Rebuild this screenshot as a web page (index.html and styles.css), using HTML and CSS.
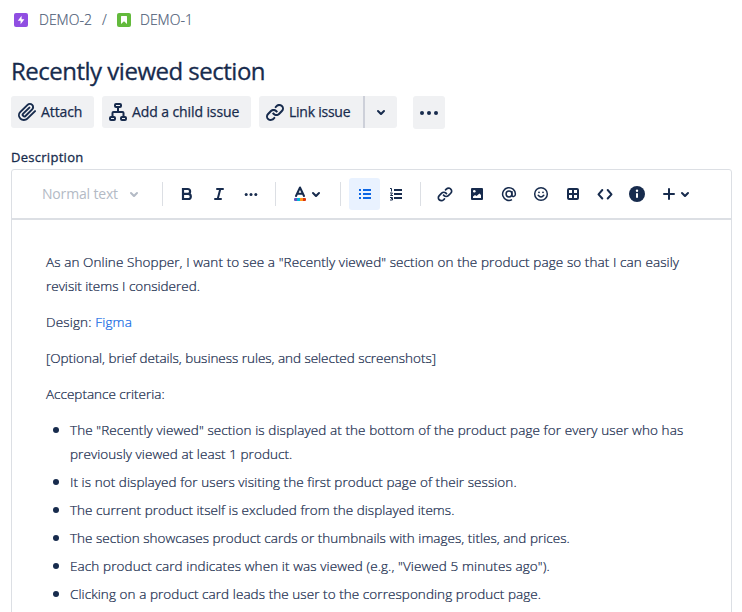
FILE: index.html
```html
<!DOCTYPE html>
<html lang="en">
<head>
<meta charset="utf-8">
<title>Recently viewed section</title>
<link rel="stylesheet" href="styles.css">
</head>
<body>
<svg class="defs" width="0" height="0">
  <symbol id="chevron" viewBox="0 0 24 24"><path fill="currentColor" d="M8.292 10.293a1.009 1.009 0 000 1.419l2.939 2.965c.218.215.5.322.779.322s.556-.107.769-.322l2.93-2.955a1.01 1.01 0 000-1.419.987.987 0 00-1.406 0l-2.298 2.317-2.307-2.327a.99.99 0 00-1.406 0z"/></symbol>
  <symbol id="link" viewBox="0 0 24 24"><path fill="currentColor" d="M12.856 5.457l-.937.92a1.002 1.002 0 000 1.437 1.047 1.047 0 001.463 0l.984-.966c.967-.95 2.542-1.135 3.602-.288a2.54 2.54 0 01.203 3.81l-2.903 2.852a2.646 2.646 0 01-3.696 0l-1.11-1.09L9 13.57l1.108 1.089c1.822 1.788 4.802 1.788 6.622 0l2.905-2.852a4.558 4.558 0 00-.357-6.82c-1.893-1.517-4.695-1.226-6.422.47zM11.144 19.543l.937-.92a1.002 1.002 0 000-1.437 1.047 1.047 0 00-1.462 0l-.985.966c-.967.95-2.542 1.135-3.602.288a2.54 2.54 0 01-.203-3.81l2.903-2.852a2.646 2.646 0 013.696 0l1.11 1.09L15 11.43l-1.108-1.089c-1.822-1.788-4.802-1.788-6.622 0l-2.905 2.852a4.558 4.558 0 00.357 6.82c1.893 1.517 4.695 1.226 6.422-.47z"/></symbol>
</svg>

<nav class="crumbs">
  <svg class="type" viewBox="0 0 14 14"><rect width="14" height="14" rx="2" fill="#904ee2"/><path fill="#fff" d="M7.6 2.8v3.4h2.8L6.6 11.2V7.8H3.8z"/></svg>
  <span class="key">DEMO-2</span>
  <span class="slash">/</span>
  <svg class="type" viewBox="0 0 14 14"><rect width="14" height="14" rx="2" fill="#63ba3c"/><path fill="#fff" d="M4 3.6Q4 3 4.6 3h4.8q.6 0 .6.6V11L7 8.2 4 11z"/></svg>
  <span class="key">DEMO-1</span>
</nav>

<h1 class="title"><span>Recently viewed section</span></h1>

<div class="actions">
  <button class="btn attach"><svg class="icon" viewBox="0 0 24 24"><path fill="currentColor" d="M11.643 17.965c-1.53 1.495-4.016 1.496-5.542.004a3.773 3.773 0 01.002-5.412l7.147-6.985a2.316 2.316 0 013.233-.003c.893.873.895 2.282.004 3.153l-6.703 6.55a.653.653 0 01-.914-.008.62.62 0 010-.902l6.229-6.087a.941.941 0 000-1.353.995.995 0 00-1.384 0l-6.23 6.087a2.502 2.502 0 000 3.607 2.643 2.643 0 003.683.009l6.703-6.55a4.144 4.144 0 00-.003-5.86 4.246 4.246 0 00-6.002.004L4.72 11.204a5.635 5.635 0 00-.001 8.118c2.29 2.237 6.015 2.238 8.308-.004l7.723-7.547a.941.941 0 000-1.353.995.995 0 00-1.384 0l-7.723 7.547z"/></svg><span>Attach</span></button>
  <button class="btn child"><svg class="icon" viewBox="0 0 24 24" fill="none" stroke="currentColor" stroke-width="2"><rect x="9" y="4" width="6" height="3" rx="1"/><rect x="4" y="17" width="5" height="3" rx="1"/><rect x="15" y="17" width="5" height="3" rx="1"/><path d="M12 7v5M6.500 17v-4q0-1 1-1h9q1 0 1 1v4"/></svg><span>Add a child issue</span></button>
  <div class="split">
    <button class="btn linkbtn"><svg class="icon"><use href="#link"/></svg><span>Link issue</span></button>
    <button class="btn drop"><svg class="icon"><use href="#chevron"/></svg></button>
  </div>
  <button class="btn more"><svg class="icon" viewBox="0 0 24 24" fill="currentColor"><circle cx="5" cy="12" r="2"/><circle cx="12" cy="12" r="2"/><circle cx="19" cy="12" r="2"/></svg></button>
</div>

<h2 class="label"><span>Description</span></h2>

<section class="editor">
  <div class="toolbar">
    <div class="style"><span>Normal text</span><svg class="icon"><use href="#chevron"/></svg></div>
    <i class="sep"></i>
    <div class="group g1">
      <div class="tool"><svg class="icon" viewBox="0 0 24 24" fill="none" stroke="currentColor" stroke-width="2.200"><path d="M8 7h4.700a2.400 2.400 0 010 4.800H8zM8 11.800h5.200a2.600 2.600 0 010 5.200H8z"/></svg></div>
      <div class="tool"><svg class="icon" viewBox="0 0 24 24" fill="none" stroke="currentColor" stroke-width="2" stroke-linecap="round"><path d="M10 7h6M8 17h6M13.300 7l-2.600 10"/></svg></div>
      <div class="tool"><svg class="icon" viewBox="0 0 24 24" fill="currentColor"><circle cx="7.200" cy="12.500" r="1.500"/><circle cx="12" cy="12.500" r="1.500"/><circle cx="16.800" cy="12.500" r="1.500"/></svg></div>
    </div>
    <i class="sep"></i>
    <div class="color">
      <svg class="icon" viewBox="0 0 24 24"><path fill="none" stroke="currentColor" stroke-width="2" stroke-linecap="round" stroke-linejoin="round" d="M8 14l4-8.500 4 8.500M9.400 11.800h5.200"/><path fill="#6554c0" d="M7 16h2v3H7q-1 0-1-1v-1q0-1 1-1z"/><path fill="#00b8d9" d="M9 16h3v3H9z"/><path fill="#ff991f" d="M12 16h3v3h-3z"/><path fill="#de350b" d="M15 16h2q1 0 1 1v1q0 1-1 1h-2z"/></svg>
      <svg class="icon"><use href="#chevron"/></svg>
    </div>
    <i class="sep"></i>
    <div class="group g2">
      <div class="tool active"><svg class="icon" viewBox="0 0 24 24" fill="currentColor"><path d="M6 7h2v2H6zM10 7h8v2h-8zM6 11h2v2H6zM10 11h8v2h-8zM6 15h2v2H6zM10 15h8v2h-8z"/></svg></div>
      <div class="tool"><svg class="icon" viewBox="0 0 24 24" fill="currentColor"><path d="M10 7h8v2h-8zM10 11h8v2h-8zM10 15h8v2h-8z"/><path fill="none" stroke="currentColor" d="M6 6.500h1.500V9.500M6 11h2.500L6.500 13.500H9M6 15.500h2.500v1H7h1.500v1.500H6"/></svg></div>
    </div>
    <i class="sep"></i>
    <div class="group g3">
      <div class="tool"><svg class="icon small"><use href="#link"/></svg></div>
      <div class="tool"><svg class="icon" viewBox="0 0 24 24"><rect x="6" y="6" width="12" height="12" rx="1" fill="currentColor"/><circle cx="9.300" cy="9.200" r="1.300" fill="#fff"/><path fill="#fff" d="M8 16v-1.500l2-1.500 1.500 1 3-2.500L16 13v3z"/></svg></div>
      <div class="tool"><svg class="icon" viewBox="0 0 24 24" fill="none" stroke="currentColor" stroke-width="1.500"><circle cx="12" cy="12" r="2.900"/><path d="M14.900 9v3.800c0 2.700 3.500 2.300 3.500-.8A6.400 6.400 0 1015 17.700"/></svg></div>
      <div class="tool"><svg class="icon" viewBox="0 0 24 24" fill="none" stroke="currentColor" stroke-width="1.500"><circle cx="12" cy="12" r="6.300"/><path d="M9.200 13.300q2.800 3.200 5.600 0" stroke-linecap="round"/><circle cx="10" cy="10.300" r=".9" fill="currentColor" stroke="none"/><circle cx="14" cy="10.300" r=".9" fill="currentColor" stroke="none"/></svg></div>
      <div class="tool"><svg class="icon" viewBox="0 0 24 24" fill="none" stroke="currentColor" stroke-width="2"><rect x="7" y="7" width="10" height="10" rx="1"/><path d="M12 7v10M7 12h10"/></svg></div>
      <div class="tool"><svg class="icon" viewBox="0 0 24 24" fill="none" stroke="currentColor" stroke-width="2" stroke-linecap="round" stroke-linejoin="round"><path d="M9.300 8L5.500 12.300l3.800 4.200M14.700 8l3.800 4.300-3.800 4.200"/></svg></div>
      <div class="tool"><svg class="icon" viewBox="0 0 24 24"><circle cx="12" cy="12" r="8" fill="currentColor"/><circle cx="12" cy="8.700" r="1.200" fill="#fff"/><rect x="11" y="11" width="2" height="5" rx="1" fill="#fff"/></svg></div>
      <div class="plus"><svg class="icon" viewBox="0 0 24 24" fill="none" stroke="currentColor" stroke-width="2" stroke-linecap="round"><path d="M12 7v10M7 12h10"/></svg><svg class="icon"><use href="#chevron"/></svg></div>
    </div>
  </div>
  <div class="content">
    <p><span class="l1">As an Online Shopper, I want to see a "Recently viewed" section on the product page so that I can easily</span><br><span class="l2">revisit items I considered.</span></p>
    <p><span class="l3">Design: <a>Figma</a></span></p>
    <p><span class="l4">[Optional, brief details, business rules, and selected screenshots]</span></p>
    <p><span class="l5">Acceptance criteria:</span></p>
    <ul>
      <li><span class="l6">The "Recently viewed" section is displayed at the bottom of the product page for every user who has</span><br><span class="l7">previously viewed at least 1 product.</span></li>
      <li><span class="l8">It is not displayed for users visiting the first product page of their session.</span></li>
      <li><span class="l9">The current product itself is excluded from the displayed items.</span></li>
      <li><span class="l10">The section showcases product cards or thumbnails with images, titles, and prices.</span></li>
      <li><span class="l11">Each product card indicates when it was viewed (e.g., "Viewed 5 minutes ago").</span></li>
      <li><span class="l12">Clicking on a product card leads the user to the corresponding product page.</span></li>
    </ul>
  </div>
</section>
</body>
</html>
```
FILE: styles.css
```css
* { box-sizing: border-box; }
html, body { height: 612px; overflow: hidden; }
body { margin: 0; padding: 8px 10px 0 11px; background: #fff; color: #172b4d; font: 14px/24px "Open Sans", "Noto Sans", sans-serif; white-space: nowrap; }
svg { display: block; flex: none; }
.defs { position: absolute; }
.icon { width: 24px; height: 24px; }
.crumbs { display: flex; align-items: center; height: 24px; padding-left: 3px; color: #505f79; font-weight: 300; -webkit-text-stroke: .2px; }
.type { width: 14px; height: 14px; }
.key { flex: none; width: 53px; margin-left: 11px; letter-spacing: 0; }
.slash { width: 15px; margin-left: 10px; }
.slash + .type + .key { margin-left: 9px; }
.title { margin: 23px 0 0; height: 33px; font-size: 24px; line-height: 32px; font-weight: 400; letter-spacing: -.5px; -webkit-text-stroke: .3px; }
.actions { display: flex; margin-top: 8px; height: 33px; }
.btn { display: flex; align-items: center; height: 32px; border: 0; border-radius: 3px; background: #f0f1f3; color: #172b4d; font: 400 14px/32px "Open Sans", "Noto Sans", sans-serif; letter-spacing: -.1px; padding: 0 0 0 4px; white-space: nowrap; }
.btn span { margin-left: 2px; -webkit-text-stroke: .25px; }
.attach { width: 83px; }
.child { width: 149px; margin-left: 8px; }
.split { display: flex; margin-left: 8px; }
.linkbtn { width: 104px; border-radius: 3px 0 0 3px; }
.linkbtn span { letter-spacing: -.25px; }
.drop { width: 34px; border-left: 2px solid #cdd0d9; border-radius: 0 3px 3px 0; padding: 0 0 0 4px; }
.more { width: 32px; height: 33px; margin-left: 16px; }
.label { margin: 16px 0 0; height: 24px; font-size: 13px; line-height: 24px; font-weight: 400; letter-spacing: .28px; -webkit-text-stroke: .3px; }
.editor { height: 460px; border: 1px solid #dcdfe4; border-radius: 3px; }
.toolbar { display: flex; align-items: center; height: 50px; border-bottom: 2px solid #dcdfe4; }
.style { display: flex; align-items: center; width: 150px; padding-left: 30px; color: #b3bac5; letter-spacing: -.17px; }
.style span { width: 80px; }
.sep { width: 1px; height: 24px; background: #dcdfe4; }
.group { display: flex; }
.tool { display: flex; width: 32px; height: 32px; align-items: center; justify-content: center; border-radius: 3px; }
.g1 { width: 112px; padding-left: 8px; }
.color { display: flex; width: 64px; padding-left: 12px; }
.color .icon + .icon, .plus .icon + .icon { margin-left: -8px; }
.g2 { width: 79px; padding-left: 8px; }
.g2 .tool { width: 31px; }
.active { background: #e9f2ff; color: #0c66e4; }
.g3 { padding-left: 8px; }
.small { width: 20px; height: 20px; }
.plus { display: flex; align-items: center; padding-left: 4px; }
.content { padding: 30px 34px 0; font-size: 13.5px; font-weight: 300; -webkit-text-stroke: .22px; }
p { margin: 0 0 12px; }
a { color: #0c66e4; }
ul { margin: 0; padding: 0; list-style: none; }
li { position: relative; margin-bottom: 4px; padding-left: 24px; }
li::before { content: ""; position: absolute; left: 6.500px; top: 8.500px; width: 6px; height: 6px; border-radius: 50%; background: #172b4d; }
.l1, .l6 { letter-spacing: .09px; }
.l3 { letter-spacing: .16px; }
.l4 { letter-spacing: -.03px; }
.l7, .l8, .l12 { letter-spacing: .065px; }
.l9 { letter-spacing: .03px; }
.l10 { letter-spacing: .02px; }
.l11 { letter-spacing: .1px; }
```
